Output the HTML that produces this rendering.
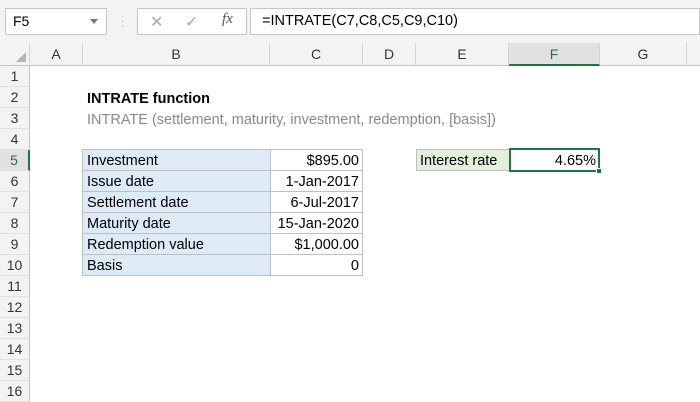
<!DOCTYPE html>
<html><head><style>
*{margin:0;padding:0;box-sizing:border-box}
body{width:700px;height:400px;overflow:hidden;background:#fff;font-family:"Liberation Sans",sans-serif;font-size:14.5px;color:#000;position:relative}
.a{position:absolute}
.ch{position:absolute;top:43px;height:23px;background:#f3f3f3;border-right:1px solid #d4d4d4;border-bottom:1px solid #c6c6c6;text-align:center;line-height:23px;font-size:14px;color:#333}
.rh{position:absolute;left:0;width:30px;background:#f3f3f3;border-right:1px solid #c6c6c6;border-bottom:1px solid #e0e0e0;text-align:center;font-size:14px;color:#333}
.c{position:absolute;height:21px;line-height:22px;padding:0 4px;white-space:nowrap}
</style></head><body>
<div class="a" style="left:0;top:0;width:700px;height:43px;background:#f3f3f3"></div>
<div class="a" style="left:5px;top:8px;width:102px;height:27px;background:#fff;border:1px solid #c6c6c6;line-height:25px;padding-left:7px;font-size:14px">F5<span style="position:absolute;right:8px;top:10px;border-left:4px solid transparent;border-right:4px solid transparent;border-top:5px solid #777"></span></div>
<div class="a" style="left:121px;top:14px;color:#aaa;font-size:10px;line-height:5px">·<br>·<br>·</div>
<div class="a" style="left:137px;top:8px;width:110px;height:27px;background:#fff;border:1px solid #c6c6c6"></div>
<div class="a" style="left:150px;top:12px;color:#aaa;font-size:16px">✕</div>
<div class="a" style="left:185px;top:12px;color:#aaa;font-size:16px">✓</div>
<div class="a" style="left:222px;top:11px;color:#555;font-size:15px;font-style:italic;font-family:'Liberation Serif',serif">fx</div>
<div class="a" style="left:250px;top:8px;width:450px;height:27px;background:#fff;border:1px solid #c6c6c6;line-height:25px;padding-left:11px;font-size:14.5px">=INTRATE(C7,C8,C5,C9,C10)</div>

<div class="ch" style="left:0;width:30px"><span style="position:absolute;right:3px;bottom:3px;border-left:10px solid transparent;border-bottom:10px solid #b5b5b5"></span></div>
<div class="ch" style="left:30px;width:53px">A</div>
<div class="ch" style="left:83px;width:187px">B</div>
<div class="ch" style="left:270px;width:93px">C</div>
<div class="ch" style="left:363px;width:53px">D</div>
<div class="ch" style="left:416px;width:93px">E</div>
<div class="ch" style="left:509px;width:91px;background:#e1e1e1;border-bottom:2px solid #217346;color:#217346">F</div>
<div class="ch" style="left:600px;width:87px">G</div>
<div class="ch" style="left:687px;width:13px;border-right:none"></div>

<div class="rh" style="top:66px;height:21px;line-height:21px">1</div>
<div class="rh" style="top:87px;height:21px;line-height:21px">2</div>
<div class="rh" style="top:108px;height:21px;line-height:21px">3</div>
<div class="rh" style="top:129px;height:21px;line-height:21px">4</div>
<div class="rh" style="top:150px;height:21px;line-height:21px;background:#e1e1e1;border-right:2px solid #217346;color:#217346">5</div>
<div class="rh" style="top:171px;height:21px;line-height:21px">6</div>
<div class="rh" style="top:192px;height:21px;line-height:21px">7</div>
<div class="rh" style="top:213px;height:21px;line-height:21px">8</div>
<div class="rh" style="top:234px;height:21px;line-height:21px">9</div>
<div class="rh" style="top:255px;height:21px;line-height:21px">10</div>
<div class="rh" style="top:276px;height:21px;line-height:21px">11</div>
<div class="rh" style="top:297px;height:21px;line-height:21px">12</div>
<div class="rh" style="top:318px;height:21px;line-height:21px">13</div>
<div class="rh" style="top:339px;height:21px;line-height:21px">14</div>
<div class="rh" style="top:360px;height:21px;line-height:21px">15</div>
<div class="rh" style="top:381px;height:21px;line-height:21px">16</div>

<div class="c" style="left:83px;top:88px;font-weight:bold">INTRATE function</div>
<div class="c" style="left:83px;top:109px;color:#8a8a8a">INTRATE (settlement, maturity, investment, redemption, [basis])</div>

<div class="a" style="left:82px;top:149px;width:281px;height:127px;border:1px solid #bfbfbf"></div>
<div class="a" style="left:83px;top:150px;width:187px;height:125px;background:#ddebf7"></div>
<div class="a" style="left:270px;top:149px;width:1px;height:127px;background:#bfbfbf"></div>
<div class="a" style="left:82px;top:170px;width:281px;height:1px;background:#bfbfbf"></div>
<div class="a" style="left:82px;top:191px;width:281px;height:1px;background:#bfbfbf"></div>
<div class="a" style="left:82px;top:212px;width:281px;height:1px;background:#bfbfbf"></div>
<div class="a" style="left:82px;top:233px;width:281px;height:1px;background:#bfbfbf"></div>
<div class="a" style="left:82px;top:254px;width:281px;height:1px;background:#bfbfbf"></div>

<div class="c" style="left:83px;top:150px">Investment</div>
<div class="c" style="left:83px;top:171px">Issue date</div>
<div class="c" style="left:83px;top:192px">Settlement date</div>
<div class="c" style="left:83px;top:213px">Maturity date</div>
<div class="c" style="left:83px;top:234px">Redemption value</div>
<div class="c" style="left:83px;top:255px">Basis</div>
<div class="c" style="left:270px;width:93px;text-align:right;top:150px">$895.00</div>
<div class="c" style="left:270px;width:93px;text-align:right;top:171px">1-Jan-2017</div>
<div class="c" style="left:270px;width:93px;text-align:right;top:192px">6-Jul-2017</div>
<div class="c" style="left:270px;width:93px;text-align:right;top:213px">15-Jan-2020</div>
<div class="c" style="left:270px;width:93px;text-align:right;top:234px">$1,000.00</div>
<div class="c" style="left:270px;width:93px;text-align:right;top:255px">0</div>

<div class="a" style="left:416px;top:149px;width:94px;height:22px;background:#e2efda;border:1px solid #bfbfbf"></div>
<div class="c" style="left:416px;top:150px">Interest rate</div>
<div class="a" style="left:509px;top:148px;width:91px;height:24px;border:2px solid #217346"></div>
<div class="c" style="left:509px;width:91px;text-align:right;top:150px">4.65%</div>
<div class="a" style="left:596px;top:168px;width:6px;height:6px;background:#217346;border:1px solid #fff"></div>
</body></html>
